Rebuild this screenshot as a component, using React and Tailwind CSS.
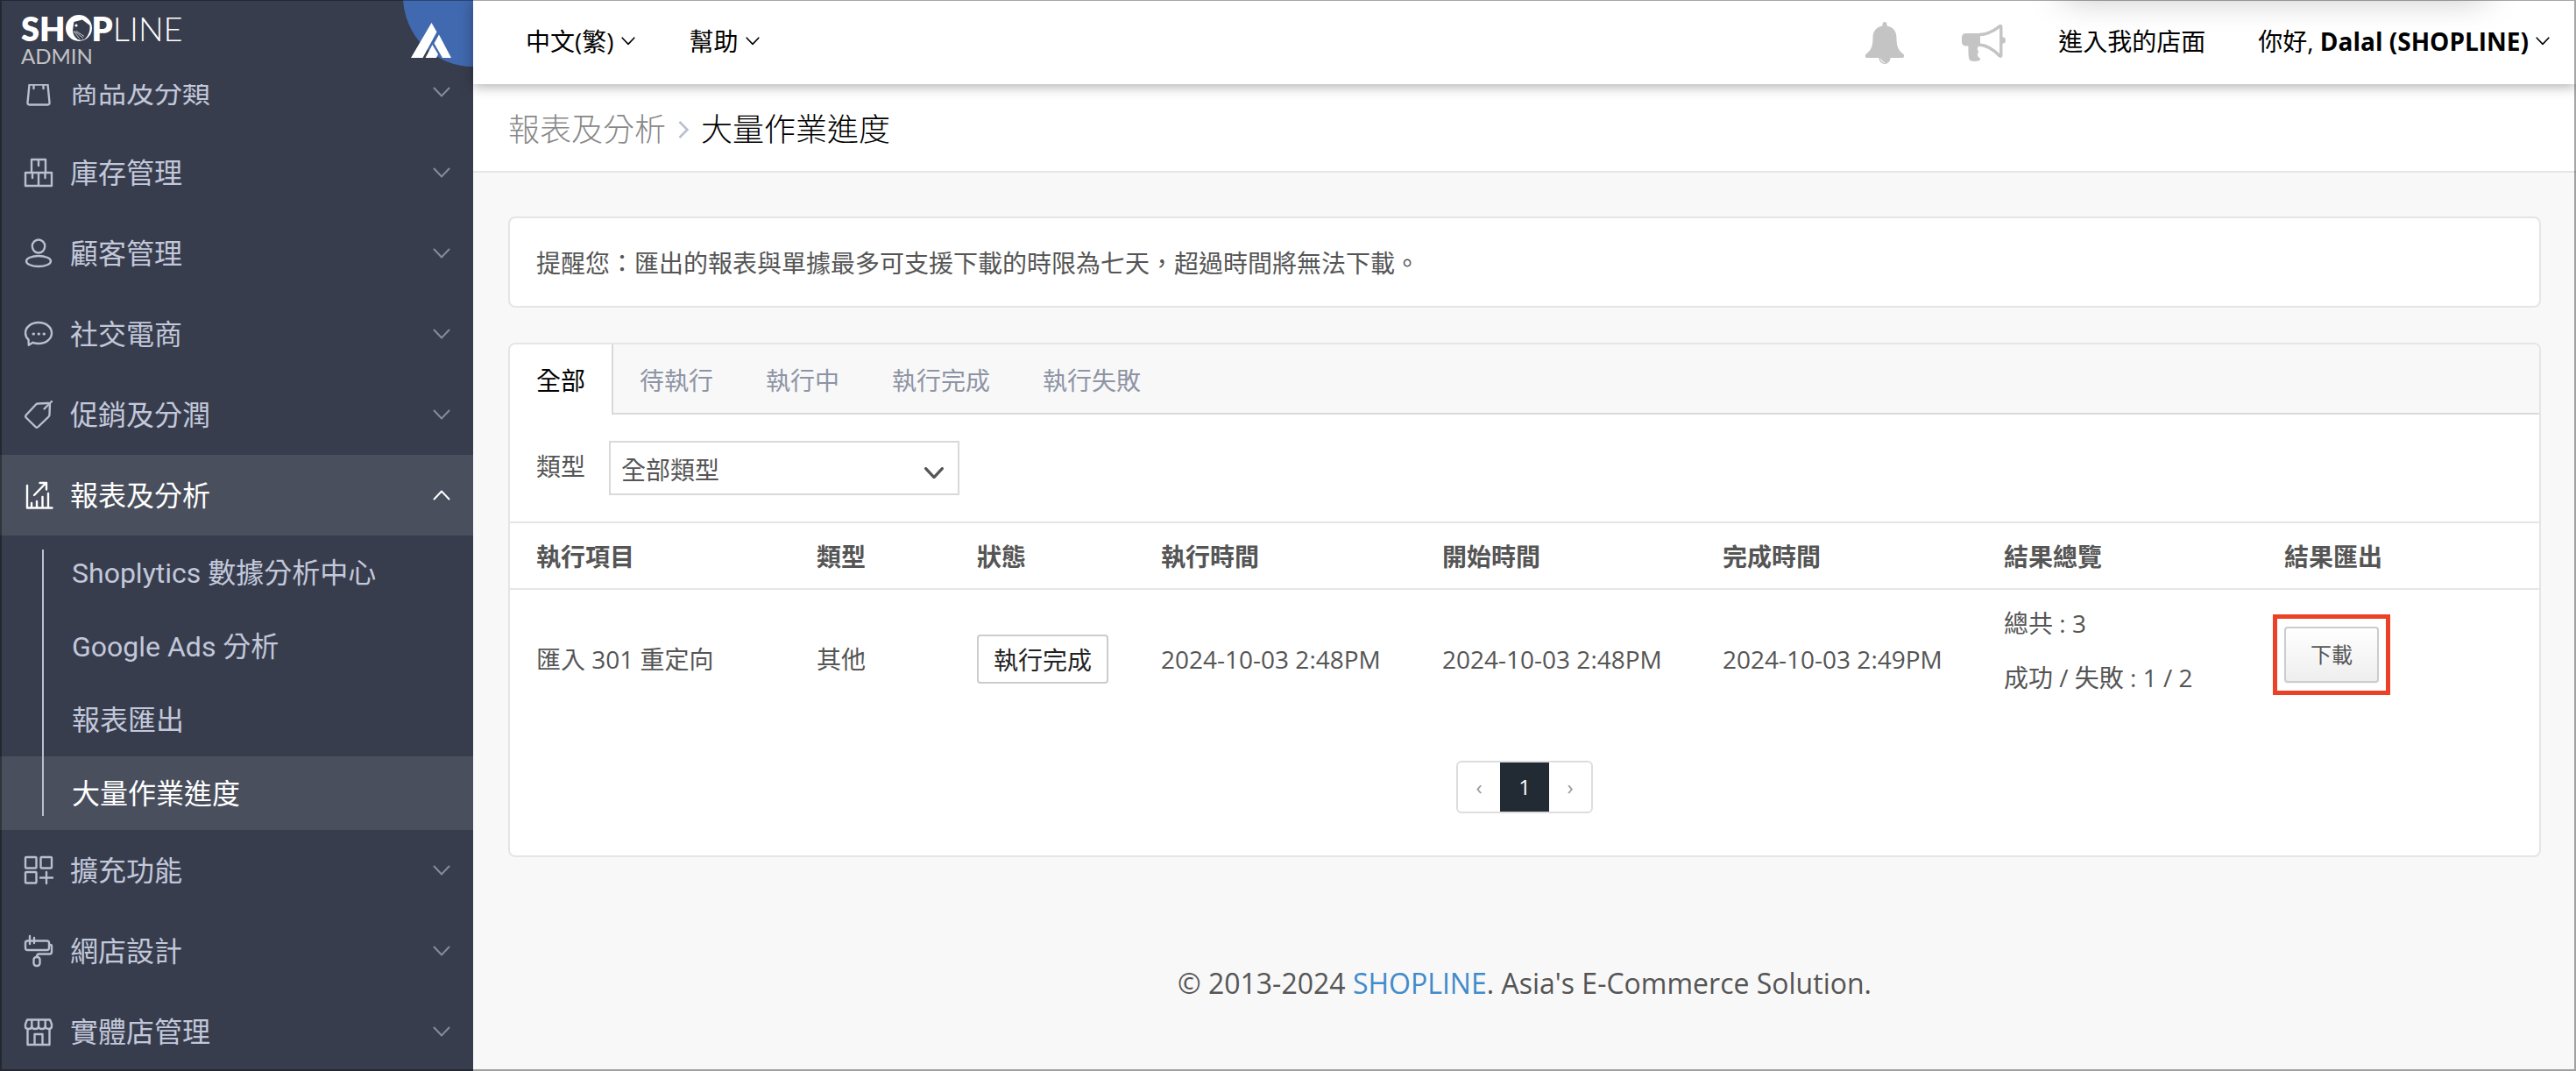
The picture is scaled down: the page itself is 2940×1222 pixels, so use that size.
import { useState } from "react";

const icons = {
  products: (
    <>
      <path d="M5.5 7.5h21l2 20.500q.2 2.500-2 2.500H5.500q-2.200 0-2-2.500z" />
      <path d="M10.500 8v4M21.500 8v4" />
    </>
  ),
  stock: (
    <>
      <path d="M8 16V1h16v15M1 16h30v15H1zM16 16v15" />
      <path d="M16 2v6M9 17v5M23.500 17v5" />
    </>
  ),
  customers: (
    <>
      <ellipse cx="16" cy="8" rx="7.200" ry="7.500" />
      <ellipse cx="16" cy="25" rx="14" ry="6" />
    </>
  ),
  social: (
    <>
      <path d="M4.500 22.500C2.300 20.500 1 17.800 1 15 1 8.300 7.500 3 16 3s15 5.300 15 12-6.500 12-15 12c-2.300 0-4.500-.4-6.400-1.200L4.800 28.800z" />
      <path d="M10 16h.5M16 16h.5M22 16h.5" strokeWidth="3" />
    </>
  ),
  promotions: (
    <>
      <path d="M15 3.500 27 3q2-.1 1.900 2L28.500 16q0 1.500-1 2.500L15.500 30q-1.500 1.500-3 0L1.800 19.500q-1.300-1.500 0-3L13 4.500q.8-1 2-1z" />
      <path d="M22.500 9.500 31 1" />
    </>
  ),
  reports: (
    <>
      <path d="M3 5v25.500h28.500M8 30v-5M14 30v-7M20.500 30V18M27 30V14" />
      <path d="M11 16 24 2.500M17.500 2H25v7.500" />
    </>
  ),
  apps: (
    <>
      <rect x="1" y="1" width="12.500" height="12.500" rx="1" />
      <rect x="18.500" y="1" width="12.500" height="12.500" rx="1" />
      <rect x="1" y="18" width="12.500" height="12.500" rx="1" />
      <path d="M25 18v13M18 24.500h14" />
    </>
  ),
  design: (
    <>
      <rect x="1" y="4.500" width="27" height="10.500" rx="2.500" />
      <path d="M6 -1v9M11 1v6M28 9h1.500q1.500 0 1.500 1.500V17q0 2.500-2.500 2.500h-12q-2.500 0-2.500 3.500" />
      <rect x="10.500" y="23" width="7" height="10" rx="3" />
    </>
  ),
  store: (
    <>
      <path d="M3 2.500h26l2 5V10q0 3-3.500 3T23.700 10q0 3-3.800 3T16 10q0 3-3.900 3T8.300 10q0 3-3.800 3T1 10V7.500z" />
      <path d="M8.300 3v7M16 3v7M23.700 3v7M3.500 13v18h25V13M11.500 31V19h9v12" />
    </>
  ),
};

const menu = [
  { label: "商品及分類", icon: "products" },
  { label: "庫存管理", icon: "stock" },
  { label: "顧客管理", icon: "customers" },
  { label: "社交電商", icon: "social" },
  { label: "促銷及分潤", icon: "promotions" },
  {
    label: "報表及分析",
    icon: "reports",
    children: ["Shoplytics 數據分析中心", "Google Ads 分析", "報表匯出", "大量作業進度"],
  },
  { label: "擴充功能", icon: "apps" },
  { label: "網店設計", icon: "design" },
  { label: "實體店管理", icon: "store" },
];

const tabs = ["全部", "待執行", "執行中", "執行完成", "執行失敗"];

const columns = [
  { label: "執行項目", width: "w-[320px]" },
  { label: "類型", width: "w-[183px]" },
  { label: "狀態", width: "w-[210px]" },
  { label: "執行時間", width: "w-[321px]" },
  { label: "開始時間", width: "w-[320px]" },
  { label: "完成時間", width: "w-[321px]" },
  { label: "結果總覽", width: "w-[320px]" },
  { label: "結果匯出", width: "w-[321px]" },
];

const jobs = [
  {
    id: 1,
    name: "匯入 301 重定向",
    type: "其他",
    status: "執行完成",
    executedAt: "2024-10-03 2:48PM",
    startedAt: "2024-10-03 2:48PM",
    finishedAt: "2024-10-03 2:49PM",
    total: 3,
    success: 1,
    failed: 2,
  },
];

const Chevron = ({ className, up = false, strokeWidth = 2 }) => (
  <svg viewBox="0 0 20 12" fill="none" stroke="currentColor" strokeWidth={strokeWidth} strokeLinecap="round" strokeLinejoin="round" className={className}>
    <path d={up ? "M1.500 10.500 10 1.500l8.500 9" : "M1.500 1.500 10 10.500l8.500-9"} />
  </svg>
);

const Logo = () => (
  <a href="#home" className="block pt-[14px] pl-6 font-[Lato,sans-serif]">
    <span className="flex h-9 items-center text-[38px] leading-9 text-white">
      <span className="font-extrabold">SH</span>
      <svg viewBox="0 0 30 30" className="size-[30px]">
        <circle cx="15" cy="15" r="15" fill="#fff" />
        <path d="M8 18 9.300 8 19 5.500 27.500 12q1 9-5.500 15.500-4 2-8.300.5Q8.500 24 8 18z" fill="#383d4d" />
        <circle cx="12" cy="12" r="1.600" fill="#fff" />
        <path d="M9 18.500l7 9M10 18.500l10 8M12 18.500l9 6" stroke="#fff" strokeWidth=".7" />
      </svg>
      <span className="font-extrabold">P</span>
      <span className="font-light">LINE</span>
    </span>
    <span className="mt-[2px] block text-2xl leading-6 text-[#c3c3c5]">ADMIN</span>
  </a>
);

const Sidebar = () => (
  <aside className="flex w-[540px] flex-none flex-col overflow-hidden bg-[#383d4d] font-[Roboto,'Noto_Sans_CJK_TC',sans-serif] text-[32px] text-[#c2c8da]">
    <div className="relative z-10 flex h-24 flex-none justify-between bg-[#383d4d]">
      <Logo />
      <svg viewBox="0 0 80 80" className="size-20">
        <circle cx="80" cy="-4" r="80" fill="#4169b0" />
        <path d="M32.500 26 38.500 36.500 22.500 66H9zM41 39.500 55 66H45L35.500 49.500zM33.500 51 40 62 38 66H25.500z" fill="#fff" />
      </svg>
    </div>
    <nav className="-mt-[37px]">
      <ul>
        {menu.map((item) => (
          <li key={item.label}>
            <button
              type="button"
              aria-expanded={!!item.children}
              className={`flex h-[92px] w-full items-center pr-[26px] pl-7 ${item.children ? "bg-[#4a4f5d] text-white" : ""}`}
            >
              <svg
                viewBox="0 0 32 32"
                fill="none"
                stroke="currentColor"
                strokeWidth="2.4"
                strokeLinecap="round"
                strokeLinejoin="round"
                className={`size-8 overflow-visible ${item.children ? "" : "text-[#b9bfcd]"}`}
              >
                {icons[item.icon]}
              </svg>
              <span className="flex-1 pt-[2px] pl-5 text-left">{item.label}</span>
              <Chevron up={!!item.children} className={`w-5 ${item.children ? "text-white" : "text-[#868c9c]"}`} />
            </button>
            {item.children && (
              <ul className="relative">
                {item.children.map((child, i) => (
                  <li key={child}>
                    <a
                      href="#reports"
                      className={`flex h-[84px] items-center pt-[2px] pl-[82px] ${i === 3 ? "bg-[#4a4f5d] text-white" : ""}`}
                    >
                      {child}
                    </a>
                  </li>
                ))}
                <li aria-hidden="true" className="absolute inset-y-4 left-12 w-[2px] bg-[#b9bfcd]" />
              </ul>
            )}
          </li>
        ))}
      </ul>
    </nav>
  </aside>
);

const Topbar = () => (
  <header className="relative z-10 flex h-24 flex-none items-center justify-between bg-white pr-[30px] pb-[2px] pl-[60px] text-black shadow-[0_2px_14px_rgba(0,0,0,0.35)]">
    <div className="pointer-events-none absolute inset-x-0 top-0 flex h-9 justify-end overflow-hidden pr-[104px]">
      <div className="-mt-7 h-5 w-[480px] shadow-[0_0_40px_rgba(0,0,0,0.4)]" />
    </div>
    <div className="flex gap-[62px]">
      <button type="button" className="flex items-center gap-2">
        中文(繁)
        <Chevron className="w-4" strokeWidth={2} />
      </button>
      <button type="button" className="flex items-center gap-2">
        幫助
        <Chevron className="w-4" strokeWidth={2} />
      </button>
    </div>
    <div className="flex items-center">
      <button type="button" aria-label="通知" className="mr-[65px] pt-1 text-[#c4c4c4]">
        <svg viewBox="0 0 46 48" fill="currentColor" className="h-12 w-[46px]">
          <path d="M20.500 4.500V2.500a2.500 2.500 0 0 1 5 0v2C33 6 36.500 11 36.500 18c0 9 1.500 14 8 19 1.500 1.500.5 4-1.500 4H3c-2 0-3-2.500-1.500-4 6.500-5 8-10 8-19 0-7 3.500-12 11-13.500z" />
          <circle cx="23" cy="41.500" r="6.500" />
          <path d="M18.500 42q.5 4 4.500 4.500" fill="none" stroke="#fff" strokeWidth="1" />
        </svg>
      </button>
      <button type="button" aria-label="公告" className="mr-[60px] pt-1 text-[#c4c4c4]">
        <svg viewBox="0 0 50 42" fill="currentColor" className="h-[42px] w-[50px]">
          <path d="M5 10h16v14.500H5q-5 0-5-5V15q0-5 5-5z" />
          <path d="M20 11.500C30 11.500 38 6 43.500 1.800q1.300-.8 1.300 1V35q0 2-1.300 1C38 30 30 24 20 23" fill="none" stroke="currentColor" strokeWidth="3.400" />
          <path d="M46 14q4 .5 4 4t-4 4z" />
          <path d="M7.500 24h12.500q-3.500 3-1.500 6 1.500 2-.5 3-.5 4 3 5.500.5 1.500-1 2.500-6 2-10.500 0-2.500-2-2-17z" />
        </svg>
      </button>
      <a href="#store" className="mr-[60px]">進入我的店面</a>
      <button type="button" className="flex items-center gap-2">
        <span>
          你好, <b>Dalal (SHOPLINE)</b>
        </span>
        <Chevron className="w-4" strokeWidth={2} />
      </button>
    </div>
  </header>
);

const JobsTable = () => (
  <table className="w-full table-fixed border-t-2 border-[#e5e5e5] text-left">
    <thead>
      <tr className="h-[76px] border-b-2 border-[#e5e5e5]">
        {columns.map((col) => (
          <th key={col.label} className={`pt-[2px] pl-[30px] font-bold ${col.width}`}>
            {col.label}
          </th>
        ))}
      </tr>
    </thead>
    <tbody>
      {jobs.map((job) => (
        <tr key={job.id} className="h-[158px]">
          <td className="pl-[30px]">{job.name}</td>
          <td className="pl-[30px]">{job.type}</td>
          <td className="pl-[30px]">
            <span className="inline-flex h-14 items-center rounded border-2 border-[#ccc] px-[17px] pt-[2px] text-[#222]">{job.status}</span>
          </td>
          <td className="pl-[30px]">{job.executedAt}</td>
          <td className="pl-[30px]">{job.startedAt}</td>
          <td className="pl-[30px]">{job.finishedAt}</td>
          <td className="pl-[30px]">
            <div className="flex flex-col gap-[22px] pb-5">
              <p>總共 : {job.total}</p>
              <p>
                成功 / 失敗 : {job.success} / {job.failed}
              </p>
            </div>
          </td>
          <td className="pb-[10px] pl-[30px]">
            <div className="relative inline-flex">
              <button
                type="button"
                className="h-16 w-[108px] rounded border-2 border-[#ccc] bg-linear-to-b from-white to-[#eee] text-2xl shadow-xs"
              >
                下載
              </button>
              <span className="pointer-events-none absolute -inset-x-[13px] -inset-y-[14px] border-[5px] border-[#eb4127]" />
            </div>
          </td>
        </tr>
      ))}
    </tbody>
  </table>
);

const App = () => {
  const [tab, setTab] = useState("全部");

  return (
    <div className="relative flex h-screen overflow-hidden bg-[#f8f8f8] font-['Open_Sans','Noto_Sans_CJK_TC',sans-serif] text-[28px] leading-10 text-[#555]">
      <Sidebar />
      <div className="flex min-w-0 flex-1 flex-col">
        <Topbar />
        <nav className="flex h-[101px] flex-none items-center gap-[14px] border-b-2 border-[#e5e5e5] bg-white px-10 pt-1 text-4xl font-light">
          <a href="#reports" className="text-[#888]">報表及分析</a>
          <svg viewBox="0 0 12 20" fill="none" stroke="#b9bfcd" strokeWidth="2.500" className="h-5 w-3">
            <path d="M1.500 1l9 9-9 9" />
          </svg>
          <span className="text-black">大量作業進度</span>
        </nav>

        <main className="flex flex-col gap-10 px-10 pt-[50px]">
          <p className="flex h-[104px] items-center rounded-lg border-2 border-[#e5e5e5] bg-white px-[30px] pt-[2px]">
            提醒您：匯出的報表與單據最多可支援下載的時限為七天，超過時間將無法下載。
          </p>

          <section className="overflow-hidden rounded-lg border-2 border-[#e5e5e5] bg-white">
            <div role="tablist" className="flex h-20">
              {tabs.map((name) => (
                <button
                  key={name}
                  type="button"
                  role="tab"
                  aria-selected={tab === name}
                  onClick={() => setTab(name)}
                  className={
                    tab === name
                      ? "border-r-2 border-[#d9d9d9] px-[30px] pt-[2px] text-black"
                      : "border-b-2 border-[#d9d9d9] bg-[#f8f8f8] px-[30px] pt-1 text-[#8e94a5]"
                  }
                >
                  {name}
                </button>
              ))}
              <span className="flex-1 border-b-2 border-[#d9d9d9] bg-[#f8f8f8]" />
            </div>

            <div className="flex items-center gap-[27px] px-[30px] py-[30px]">
              <label htmlFor="type" className="pb-1">類型</label>
              <div className="relative">
                <select id="type" className="h-[62px] w-[400px] appearance-none border-2 border-[#d9d9d9] bg-white pt-1 pl-3">
                  <option>全部類型</option>
                </select>
                <Chevron className="pointer-events-none absolute top-[30px] right-[18px] w-[22px]" strokeWidth={3} />
              </div>
            </div>

            <JobsTable />

            <div className="flex justify-center pt-[38px] pb-12">
              <div className="flex h-[60px] overflow-hidden rounded-md border-2 border-[#ddd] text-2xl">
                <button type="button" aria-label="上一頁" className="w-12 text-[#999]">‹</button>
                <button type="button" className="-my-[2px] w-14 border-y-2 border-[#1a1d25] bg-[#222a33] text-white">1</button>
                <button type="button" aria-label="下一頁" className="w-12 text-[#999]">›</button>
              </div>
            </div>
          </section>
        </main>

        <footer className="pt-[124px] text-center text-[32px]">
          © 2013-2024 <a href="#shopline" className="text-[#428bca]">SHOPLINE</a>. Asia's E-Commerce Solution.
        </footer>
      </div>
      <div className="pointer-events-none absolute inset-0 z-20 border-2 border-t border-black/35" />
    </div>
  );
};

export default App;
